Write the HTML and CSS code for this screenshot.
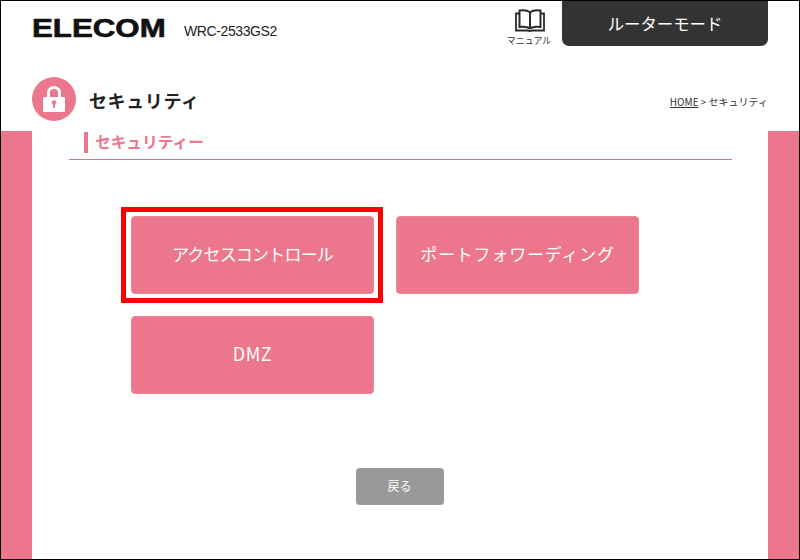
FILE: index.html
```html
<!DOCTYPE html>
<html lang="ja">
<head>
<meta charset="utf-8">
<title>セキュリティ</title>
<link rel="stylesheet" href="styles.css">
</head>
<body>
<div class="frame">
  <header class="top">
    <div class="brand">
      <span class="logo">ELECOM</span>
      <span class="model">WRC-2533GS2</span>
    </div>
    <div class="top-right">
      <a class="manual">
        <svg class="book" width="30" height="23" viewBox="0 0 30 23" fill="none" stroke="#2b2b2b" stroke-width="2">
          <path d="M15 3.2C12.5 1.4 8 0.9 4.5 1.6V18C8 17.4 12.5 17.8 15 19.4C17.5 17.8 22 17.4 25.5 18V1.6C22 0.9 17.5 1.4 15 3.2Z"/>
          <path d="M15 3.2V19.4"/>
          <path d="M4.5 4.5H1V21.5H12.5L15 22L17.5 21.5H29V4.5H25.5" stroke-width="1.8"/>
        </svg>
        <span class="manual-label">マニュアル</span>
      </a>
      <div class="mode">ルーターモード</div>
    </div>
  </header>
  <div class="title-row">
    <div class="title-left">
      <span class="title-icon">
        <svg width="22" height="26" viewBox="0 0 22 26">
          <path d="M5.5 12V6.5a5.5 5 0 0 1 11 0V12" fill="none" stroke="#fff" stroke-width="3"/>
          <rect x="0" y="11" width="22" height="15" rx="1" fill="#fff"/>
          <circle cx="11" cy="16.5" r="2.2" fill="#ec778c"/>
          <rect x="10.1" y="17" width="1.8" height="5" fill="#ec778c"/>
        </svg>
      </span>
      <h1 class="title">セキュリティ</h1>
    </div>
    <div class="crumb"><a class="crumb-home">HOME</a> &gt; セキュリティ</div>
  </div>
  <div class="body">
    <aside class="side"></aside>
    <main class="content">
      <h2 class="section"><span class="section-bar"></span>セキュリティー</h2>
      <div class="grid">
        <div class="slot selected"><a class="tile tile-tight">アクセスコントロール</a></div>
        <div class="slot"><a class="tile tile-wide">ポートフォワーディング</a></div>
        <div class="slot"><a class="tile tile-latin">DMZ</a></div>
      </div>
      <div class="actions"><a class="back">戻る</a></div>
    </main>
    <aside class="side"></aside>
  </div>
</div>
</body>
</html>
```
FILE: styles.css
```css
* { box-sizing: border-box; }
html, body { margin: 0; padding: 0; }
body {
  width: 800px;
  height: 560px;
  overflow: hidden;
  font-family: "Noto Sans CJK JP", "Liberation Sans", sans-serif;
  background: #fff;
  color: #222;
}
.frame {
  width: 800px;
  height: 560px;
  border: 1px solid #000;
  display: flex;
  flex-direction: column;
}
.top {
  height: 46px;
  display: flex;
  justify-content: space-between;
  padding-left: 31px;
  padding-right: 31px;
}
.brand { display: flex; align-items: flex-start; }
.logo {
  display: block;
  width: 133px;
  margin-top: 12px;
  font: 700 25px/30px "Liberation Sans", sans-serif;
  color: #111;
  transform: scaleX(1.25);
  transform-origin: left center;
  -webkit-text-stroke: 0.6px #111;
}
.model {
  margin: 21px 0 0 19px;
  font: 14px/18px "Liberation Sans", sans-serif;
  letter-spacing: -0.4px;
  color: #222;
}
.top-right { display: flex; align-items: flex-start; }
.manual {
  width: 54px;
  margin-right: 6px;
  padding-top: 8px;
  display: flex;
  flex-direction: column;
  align-items: center;
}
.book { display: block; margin-left: 1px; }
.manual-label { font-size: 9px; line-height: 12px; margin-top: 3px; color: #333; white-space: nowrap; }
.mode {
  width: 206px;
  height: 45px;
  background: #333;
  border-radius: 0 0 7px 7px;
  color: #fff;
  text-align: center;
  font-size: 16.4px;
  line-height: 45px;
}
.title-row {
  height: 84px;
  padding: 30px 31px 0 31px;
  display: flex;
  justify-content: space-between;
}
.title-left { display: flex; align-items: flex-start; }
.title-icon {
  width: 44px;
  height: 44px;
  border-radius: 50%;
  background: #ec778c;
  display: flex;
  align-items: center;
  justify-content: center;
}
.title {
  margin: 8px 0 0 13px;
  font-size: 18px;
  line-height: 30px;
  font-weight: 700;
  letter-spacing: 0.6px;
  color: #222;
}
.crumb { margin-top: 17px; font-size: 10px; line-height: 16px; color: #333; }
.crumb-home { text-decoration: underline; }
.body { flex: 1; display: flex; min-height: 0; }
.side { width: 31px; background: #ec778c; }
.content { flex: 1; padding: 0 36px 0 37px; display: flex; flex-direction: column; }
.section {
  margin: 0;
  height: 29px;
  border-bottom: 1px solid #ec6f86;
  display: flex;
  align-items: flex-start;
  font-size: 15.7px;
  line-height: 21px;
  font-weight: 700;
  color: #ec778c;
}
.section-bar {
  width: 4px;
  height: 21px;
  margin: 1px 7px 0 15px;
  background: #ec778c;
}
.grid {
  margin: 56px 0 0 62px;
  display: grid;
  grid-template-columns: 243px 243px;
  grid-auto-rows: 78px;
  column-gap: 22px;
  row-gap: 22px;
}
.slot { position: relative; }
.tile {
  display: flex;
  width: 100%;
  height: 100%;
  padding-bottom: 4px;
  align-items: center;
  justify-content: center;
  background: #ec778c;
  border: 1px solid #ee8496;
  border-radius: 4px;
  color: #fff;
  font-size: 17px;
}
.tile-tight { letter-spacing: -0.8px; }
.tile-wide { letter-spacing: 0.8px; }
.tile-latin { font-size: 18px; letter-spacing: 0.5px; }
.selected::after {
  content: "";
  position: absolute;
  inset: -9px -9px -9px -10px;
  border: 5px solid #f00;
}
.actions { margin-top: 74px; display: flex; justify-content: center; padding-right: 2px; }
.back {
  width: 88px;
  height: 37px;
  background: #999;
  border-radius: 4px;
  color: #fff;
  font-size: 12px;
  line-height: 36px;
  text-align: center;
}
```
